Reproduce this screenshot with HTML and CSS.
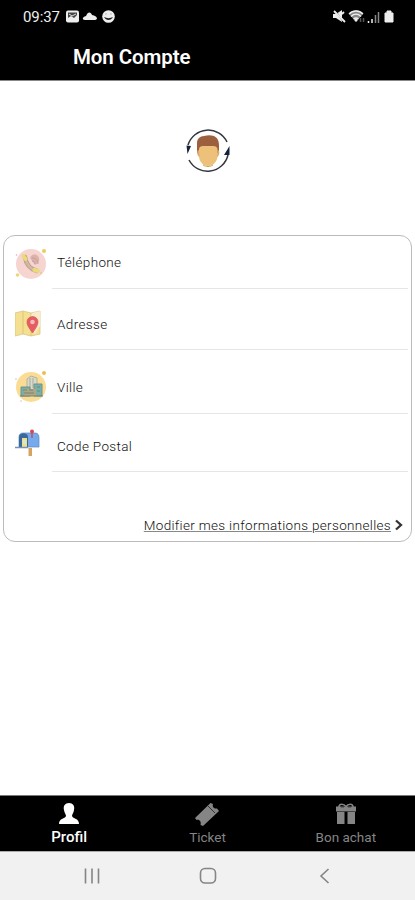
FILE: index.html
```html
<!DOCTYPE html>
<html lang="fr">
<head>
<meta charset="utf-8">
<title>Mon Compte</title>
<link rel="stylesheet" href="styles.css">
</head>
<body>
<header class="top">
  <div class="status">
    <span class="clock">09:37</span>
    <svg class="notices" viewBox="0 0 52 16" width="52" height="16">
      <rect x="1" y="1.500" width="13" height="12" rx="2" fill="#eee"/>
      <path d="M3 3.500h9v2.500L9 9 6 7 3 9z" fill="#444"/><path d="M4 5l3 2 4-2" stroke="#ddd" fill="none"/>
      <path d="M20 11c-3 0-3-3 1-4 2-5 5-4 6-1 6 1 6 5 3 5z" fill="#eee"/>
      <circle cx="43.500" cy="7.500" r="6.300" fill="#eee"/><path d="M39 8c2 4 7 4 9 0-3 1.500-6 1.500-9 0z" fill="#222"/><path d="M40 5h2m3 0h2" stroke="#bbb"/>
    </svg>
    <svg class="signals" viewBox="0 0 64 16" width="64" height="16">
      <path d="M1 5h3l6-4v12l-6-4H1z" fill="#eee"/><path d="M3 2l9 11" stroke="#000" stroke-width="1.500"/><path d="M2 2l11 11M10 5l2-2" stroke="#eee" stroke-width="1.800"/>
      <path d="M17 5c4-5 11-5 14 0l-7 8z" fill="#888"/><g fill="none" stroke="#eee" stroke-width="1.400"><path d="M17 5c4-4 10-4 14 0M19 7.500c3-3 7-3 10 0M21.500 10c2-1.500 3-1.500 5 0"/></g>
      <circle cx="24" cy="11" r="1.500" fill="#eee"/><path d="M28.500 13V9m3 0v4" stroke="#555" stroke-width="1.500"/>
      <path d="M36.500 14v-2m3.500 2v-4" stroke="#eee" stroke-width="1.500"/><path d="M43.500 14V6m3 8V3" stroke="#888" stroke-width="1.500"/>
      <path d="M55 2h4v2h2v9h-8V4h2z" fill="#eee" stroke="#eee" stroke-linejoin="round"/>
    </svg>
  </div>
  <h1 class="title">Mon Compte</h1>
</header>
<main class="content">
  <svg class="avatar" viewBox="0 0 46 46" width="46" height="46">
    <path d="M3 17A21 21 0 0 1 42 14M43 27A21 21 0 0 1 4 32" fill="none" stroke="#33363d" stroke-width="1.500"/>
    <path d="M1.500 17.500l4.500.5-3.500 8zM44.500 18v9H39z" fill="#14213c"/>
    <path d="M12 25V15c0-4 3-7 7-7 8-2 15 0 15 9v8z" fill="#9d603e"/>
    <path d="M14 21c0-2 2-3 4-3h10c3 0 4.500 1 4.500 4v6c0 6-5 10-9.500 10s-9-4-9-10z" fill="#edc179"/>
    <path d="M14 22c-3 0-2 6 .5 7m18-7c3 0 2 6-.5 7" fill="#dca767"/>
    <path d="M18 37c3 2 7 2 10 0" fill="none" stroke="#cca05e"/>
  </svg>
  <section class="card">
    <div class="row phone">
      <svg class="icon" viewBox="0 0 32 32" width="32" height="32">
        <circle cx="16" cy="17" r="15" fill="#f6d5d1"/>
        <path d="M15 11c2-5 8-4 9 0 1 3-1 6-4 7" fill="#ddb1ac"/>
        <path d="M10 10c1 7 5 12 12 14" fill="none" stroke="#b69d8d" stroke-width="4.500" stroke-linecap="round"/>
        <path d="M10 10c1 7 5 12 12 14" fill="none" stroke="#d5b6a0" stroke-width="2.500" stroke-linecap="round"/>
        <path d="M8.500 9l2 3m9 11l3.500 1" stroke="#eadb76" stroke-width="4" stroke-linecap="round"/>
        <path d="M17 11c4 0 6 3 6 6m-6-3c2 0 3 1 3 3" stroke="#c49f99" fill="none"/>
        <circle cx="29" cy="4" r="2" fill="#edcb5d"/><circle cx="2.500" cy="28" r="1.800" fill="#f1d37c"/><circle cx="1.500" cy="8" r=".8" fill="#e7a7bb"/><circle cx="26" cy="26" r="1" fill="#edc68d"/>
      </svg>
      <span>Téléphone</span>
    </div>
    <div class="row address">
      <svg class="icon" viewBox="0 0 32 32" width="32" height="32">
        <path d="M0 4l8-2 8 2 9-2v23l-9 2-8-2-8 2z" fill="#f5df91" stroke="#d8c681" stroke-width=".8"/>
        <path d="M8 2v23M16 4v23" stroke="#dbc577"/><path d="M17 4l8-2v15l-5 8-7-11z" fill="#fae9ca"/>
        <path d="M17.500 24c-4-6-5.500-8-5.500-11a5.500 5.500 0 0 1 11 0c0 3-2 6-5.500 11z" fill="#e65c60" stroke="#d45b5b" stroke-width=".7"/><circle cx="17.500" cy="13" r="2.300" fill="#f3bdba"/>
      </svg>
      <span>Adresse</span>
    </div>
    <div class="row city">
      <svg class="icon" viewBox="0 0 32 32" width="32" height="32">
        <circle cx="16" cy="17" r="15" fill="#fbdc94"/>
        <path d="M12 9l4-3 6 2v12H12z" fill="#d5dccf" stroke="#aaa78f" stroke-width=".8"/><path d="M15 8v11m3-11v10" stroke="#b0a790"/>
        <path d="M6 17h9v9H6zM19 14h8v12h-8z" fill="#77afaa" stroke="#729289"/>
        <path d="M9 19h12v7H9z" fill="#b2a681"/><path d="M5 26h23M8 20h4m2 0h4m4-3h3m-3 4h3M9 23h10" stroke="#71877a" stroke-width="1.200"/>
        <circle cx="29" cy="3" r="2" fill="#edbd50"/><circle cx="1" cy="9" r=".7" fill="#e9a490"/><circle cx="6" cy="31" r=".8" fill="#d8c3b0"/>
      </svg>
      <span>Ville</span>
    </div>
    <div class="row postal">
      <svg class="icon" viewBox="0 0 32 32" width="32" height="32">
        <path d="M13.500 19h3.500v8h-3.500z" fill="#d8a263"/><path d="M4 18V8c0-3 2-4 4-4h12c3 0 4 2 4 5v9z" fill="#77a9ed" stroke="#5e87bd" stroke-width=".7"/>
        <path d="M4 18V8c0-5 9-5 9 0v10z" fill="#39699b"/><path d="M7 9h5v9H7z" fill="#f0df87"/><path d="M8 11h3v4H8" fill="#d7e8d2"/>
        <path d="M0 18.500h13" stroke="#7493b9" stroke-width="1.500"/><path d="M17 9V3" stroke="#b35669" stroke-width="1.500"/><circle cx="17" cy="2.500" r="2" fill="#dc4258"/>
      </svg>
      <span>Code Postal</span>
    </div>
    <a class="edit"><span class="link">Modifier mes informations personnelles</span>
      <svg viewBox="0 0 8 12" width="8" height="12"><path d="M1 1.500L6 6l-5 4.500" fill="none" stroke="#333" stroke-width="2.300"/></svg>
    </a>
  </section>
</main>
<nav class="tabs">
  <div class="tab active">
    <svg viewBox="0 0 24 24" width="24" height="24"><path d="M12 1c4 0 6 3 5 7-.4 3-2 4-2 6 1 3 7 2 7 8H2c0-6 6-5 7-8 0-2-1.600-3-2-6-1-4 1-7 5-7z" fill="#fff"/></svg>
    <span>Profil</span>
  </div>
  <div class="tab">
    <svg viewBox="0 0 26 24" width="26" height="24"><path d="M1 16L16.500 1l2.500 1c-1 3 1 5 4 4.500l2 2.500L9 24l-2.500-1c1-3-1-6-4-5z" fill="#858585"/><path d="M14 4l7 7" stroke="#333" stroke-width="1"/></svg>
    <span>Ticket</span>
  </div>
  <div class="tab">
    <svg viewBox="0 0 24 24" width="24" height="24"><path d="M2 4.500h20v5H2zm1 5h7.500V22H3zm10.500 0H21V22h-7.500z" fill="#858585"/><path d="M5 5c0-4 5-3 7-.5C14 2 19 1 19 5" fill="none" stroke="#858585" stroke-width="1.600"/><path d="M7 5h3m4 0h3M3 9.500h18" stroke="#333" stroke-width=".8"/></svg>
    <span>Bon achat</span>
  </div>
</nav>
<footer class="system">
  <svg viewBox="0 0 18 18" width="18" height="18"><path d="M2.500 1.500v15m6.500-15v15m6.500-15v15" stroke="#858585" stroke-width="1.600"/></svg>
  <svg viewBox="0 0 18 18" width="18" height="18"><rect x="1.500" y="1.500" width="15" height="14.500" rx="4.500" fill="none" stroke="#858585" stroke-width="1.600"/></svg>
  <svg viewBox="0 0 18 18" width="18" height="18"><path d="M13.500 2L6 9l7.500 7" fill="none" stroke="#858585" stroke-width="1.600"/></svg>
</footer>
</body>
</html>
```
FILE: styles.css
```css
* { box-sizing: border-box; }
body {
  margin: 0;
  height: 900px;
  display: flex;
  flex-direction: column;
  overflow: hidden;
  background: #fff;
  font-family: Roboto, sans-serif;
  color: #444;
}
svg { display: block; flex: none; }
.top { height: 81px; background: #000; color: #fff; border-bottom: 1px solid #888; }
.status { height: 33px; padding: 1px 19px 0 23px; display: flex; align-items: center; }
.clock { width: 42px; font-size: 15px; letter-spacing: -0.1px; color: #eee; }
.signals { margin-left: auto; }
.title { margin: 0; padding-left: 73px; font-size: 20.5px; line-height: 49px; font-weight: 600; letter-spacing: -0.1px; }
.content { flex: 1; padding: 47px 3px 0; }
.avatar { margin: 0 auto 61px; }
.card { height: 307px; border: 1px solid #bbb; border-radius: 12px; padding: 0 3px 0 11px; }
.row { position: relative; display: flex; gap: 10px; font-size: 13.5px; line-height: 20px; letter-spacing: 0.35px; font-weight: 300; }
.row span { flex: 1; color: #111; }
.row::after { content: ""; position: absolute; left: 37px; right: 0; bottom: 0; height: 1px; background: #e6e6e6; }
.phone { height: 53px; padding-top: 11px; }
.phone span { padding-top: 5px; }
.address { height: 61px; padding-top: 20px; }
.address span { padding-top: 5px; }
.city { height: 64px; padding-top: 20px; }
.city span { padding-top: 7px; }
.postal { height: 58px; padding-top: 15px; }
.postal span { padding-top: 7px; }
.edit { display: flex; justify-content: flex-end; align-items: center; gap: 4px; height: 20px; margin: 43px 5px 0 0; font-size: 13.5px; letter-spacing: 0.32px; font-weight: 300; color: #111; }
.link { text-decoration: underline; text-decoration-color: #888; text-underline-offset: 1px; }
.tabs { height: 57px; background: #000; border-top: 1px solid #777; border-bottom: 1px solid #aaa; display: grid; grid-template-columns: repeat(3, 1fr); }
.tab { display: flex; flex-direction: column; align-items: center; padding-top: 6px; color: #858585; font-size: 13.5px; line-height: 22px; letter-spacing: 0; }
.active { color: #fff; font-size: 15px; line-height: 23px; font-weight: 500; }
.system { height: 48px; background: #f1f1f1; display: grid; grid-template-columns: repeat(3, 116px); justify-content: center; justify-items: center; align-items: center; }
```
